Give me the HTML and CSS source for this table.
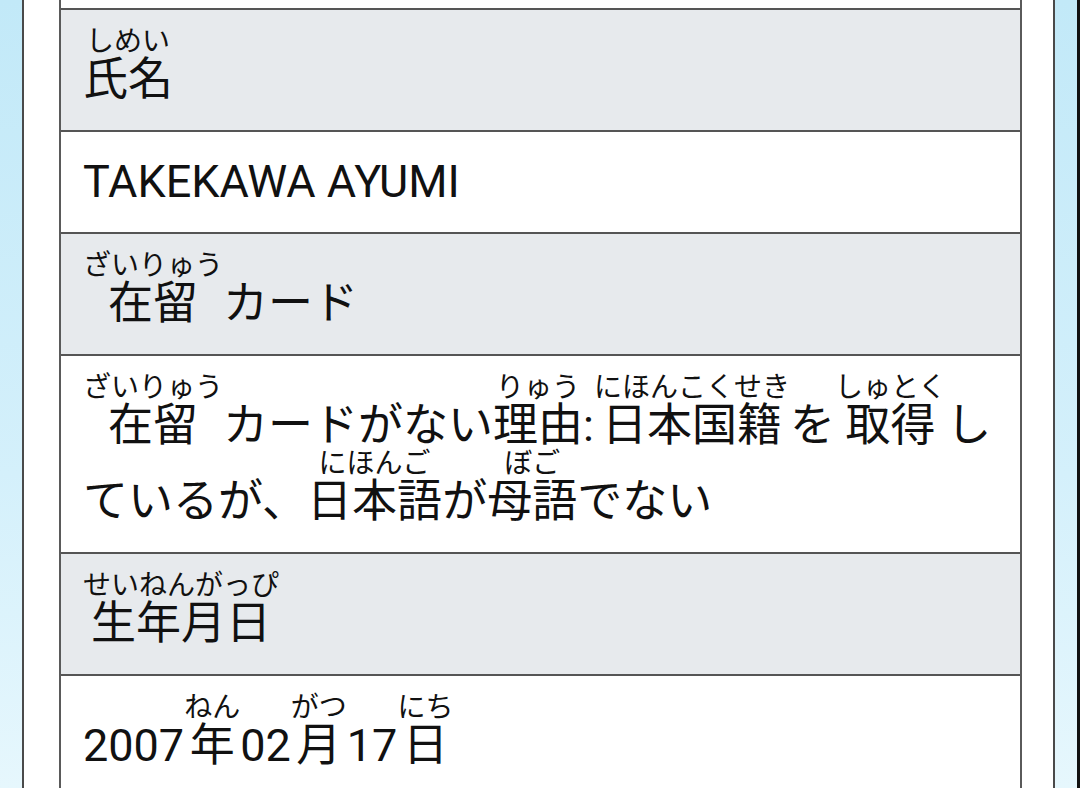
FILE: index.html
```html
<!DOCTYPE html>
<html lang="ja">
<head>
<meta charset="utf-8">
<link rel="stylesheet" href="styles.css">
</head>
<body>
<div class="screen">
  <div class="sheet">
    <div class="table">
      <div class="row cut"></div>
      <div class="row head ruby-row"><span class="fg"><ruby>氏名<rt>しめい</rt></ruby></span></div>
      <div class="row">TAKEKAWA AYUMI</div>
      <div class="row head ruby-row"><span class="fg"><ruby>在留<rt>ざいりゅう</rt></ruby></span>カード</div>
      <div class="row ruby-row"><span class="fg"><ruby>在留<rt>ざいりゅう</rt></ruby></span>カードがない<span class="fg"><ruby>理由<rt>りゅう</rt></ruby></span>:<span class="fg"><ruby>日本国籍<rt>にほんこくせき</rt></ruby></span>を<span class="fg"><ruby>取得<rt>しゅとく</rt></ruby></span>しているが、<span class="fg"><ruby>日本語<rt>にほんご</rt></ruby></span>が<span class="fg"><ruby>母語<rt>ぼご</rt></ruby></span>でない</div>
      <div class="row head ruby-row"><span class="fg"><ruby>生年月日<rt>せいねんがっぴ</rt></ruby></span></div>
      <div class="row ruby-row">2007<span class="fg"><ruby>年<rt>ねん</rt></ruby></span>02<span class="fg"><ruby>月<rt>がつ</rt></ruby></span>17<span class="fg"><ruby>日<rt>にち</rt></ruby></span></div>
    </div>
  </div>
</div>
</body>
</html>
```
FILE: styles.css
```css
html, body {
  margin: 0;
  padding: 0;
  height: 100%;
  overflow: hidden;
}
body {
  font-family: Roboto, "Noto Sans CJK JP", sans-serif;
  color: #111;
}
.screen {
  height: 788px;
  display: flex;
  background: linear-gradient(180deg, #c2e9f8 0%, #d4f0fb 60%, #e6f7fd 100%);
  border-right: 3px solid #111;
  box-sizing: border-box;
}
.sheet {
  margin-left: 22px;
  margin-right: 22px;
  flex: 1;
  background: #fff;
  border-left: 2px solid #4a4a4a;
  border-right: 2px solid #4a4a4a;
  padding: 0 31px 0 35px;
  overflow: hidden;
}
.table {
  border-left: 2px solid #5a5a5a;
  border-right: 2px solid #5a5a5a;
}
.row {
  font-size: 45px;
  line-height: 60px;
  padding: 20px 8px 20px 22px;
  border-bottom: 2px solid #555;
  background: #fff;
}
.row.ruby-row {
  line-height: 76px;
  padding-top: 32px;
  padding-bottom: 12px;
}
.row.cut {
  height: 8px;
  padding: 0;
}
.row.head {
  background: #e7eaed;
}
.fg {
  display: inline-block;
  margin-top: -16px;
}
ruby {
  ruby-align: center;
}
rt {
  font-size: 28px;
  line-height: 1;
  font-family: "Noto Sans CJK JP", sans-serif;
}
```
